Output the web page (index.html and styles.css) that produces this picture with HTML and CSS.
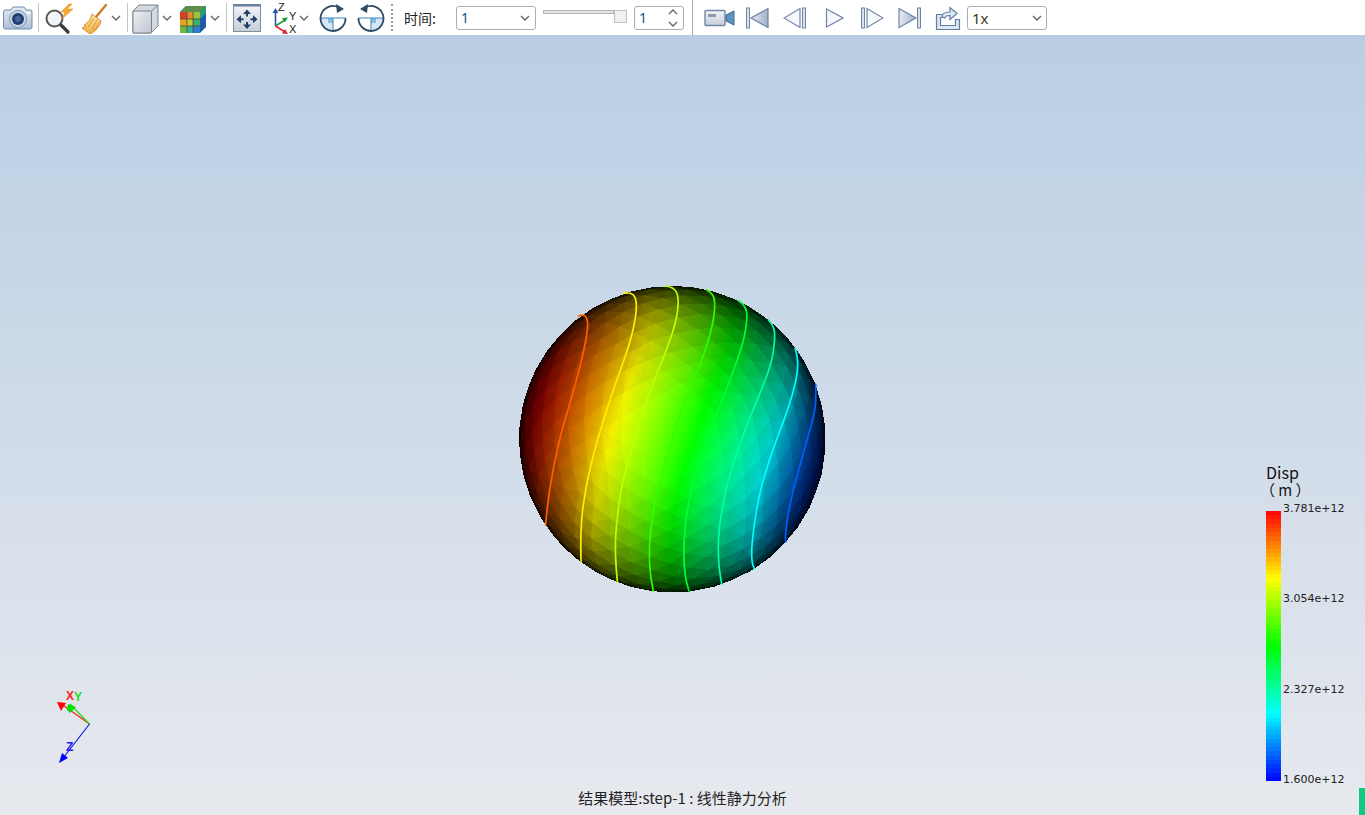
FILE: index.html
```html
<!DOCTYPE html>
<html lang="zh">
<head>
<meta charset="utf-8">
<title>结果模型</title>
<link rel="stylesheet" href="styles.css">
</head>
<body>
<svg class="defs" width="0" height="0" aria-hidden="true">
  <defs>
    <linearGradient id="gBlue" x1="0" y1="0" x2="0" y2="1"><stop offset="0" stop-color="#e6edf5"/><stop offset="1" stop-color="#aebfd4"/></linearGradient>
    <linearGradient id="gGrey" x1="0" y1="0" x2="1" y2="1"><stop offset="0" stop-color="#eef1f4"/><stop offset="1" stop-color="#bcc4cd"/></linearGradient>
    <linearGradient id="gFit" x1="0" y1="0" x2="0" y2="1"><stop offset="0" stop-color="#f2f4f7"/><stop offset="1" stop-color="#c6ced8"/></linearGradient>
    <linearGradient id="gMedia" x1="0" y1="0" x2="1" y2="0"><stop offset="0" stop-color="#e8edf4"/><stop offset="1" stop-color="#9fb0c8"/></linearGradient>
    <linearGradient id="gBroom" x1="0" y1="0" x2="0" y2="1"><stop offset="0" stop-color="#fde9a8"/><stop offset="1" stop-color="#f3ae3c"/></linearGradient>
  </defs>
</svg>
<header class="toolbar">
  <svg class="ml-0" width="30" height="26" viewBox="0 0 30 26"><path d="M2 5h6l2-3h11l2 3h4a2 2 0 0 1 2 2v15a2 2 0 0 1-2 2H2a2 2 0 0 1-1.500-2V7A2 2 0 0 1 2 5z" fill="url(#gBlue)" stroke="#6d8bab"/><circle cx="15" cy="14" r="8.500" fill="#c8d5e4" stroke="#7f97b2"/><circle cx="15" cy="14" r="6" fill="#1f3f73"/><circle cx="15" cy="14" r="3" fill="#48689c"/><rect x="24" y="7" width="3" height="2" fill="#fff"/></svg>
  <span class="sep ml-5"></span>
  <svg class="ml-5" width="30" height="32" viewBox="0 0 30 32"><circle cx="10.500" cy="16.500" r="8" fill="#f2f5f8" stroke="#555" stroke-width="2"/><path d="M17 23l7 7" stroke="#3b3b3b" stroke-width="3.200" stroke-linecap="round"/><path d="M25 2l-8 8h4l-3 7 11-10h-6l5-5z" fill="#f7a834" stroke="#e58a1a" stroke-width=".5"/></svg>
  <svg class="ml-7" width="27" height="32" viewBox="0 0 27 32"><path d="M25 3l-10 12" stroke="#c77f2c" stroke-width="2.400" stroke-linecap="round"/><path d="M11 12l9 7c-1 5-5 10-11 13l-8-6 4-1.500-2-1.500c4-2 7-6 8-11z" fill="url(#gBroom)" stroke="#d58a2c"/><path d="M13 16l-6 9M16 18l-5 10M18 20l-4 8" stroke="#d58a2c" stroke-width=".8"/></svg>
  <svg class="ml-3 chev" width="10" height="6" viewBox="0 0 10 6"><path d="M1 1l4 4 4-4" class="chev-line"/></svg>
  <span class="sep ml-6"></span>
  <svg class="ml-3" width="28" height="32" viewBox="0 0 28 32"><path d="M2 9l6-6h19v21l-7 7H2z" fill="#d4d9df" stroke="#76838f"/><rect x="2" y="9" width="18.500" height="22" rx="1" fill="url(#gGrey)" stroke="#76838f"/><path d="M20.500 9L27 3" stroke="#76838f"/></svg>
  <svg class="ml-3 chev" width="10" height="6" viewBox="0 0 10 6"><path d="M1 1l4 4 4-4" class="chev-line"/></svg>
  <svg class="ml-7" width="28" height="32" viewBox="0 0 28 32"><path d="M1 10l6-6h20v21l-6 6z" fill="#1d5aa8"/><path d="M1 10l6-6h20l-6 6z" fill="#5e8f4a"/><path d="M21 10l6-6v7l-6 6z" fill="#2d9c7a"/><rect x="1" y="10" width="20" height="21" fill="#e8b020"/><rect x="1" y="10" width="7" height="7" fill="#d8402a"/><rect x="8" y="10" width="6" height="7" fill="#e8862a"/><rect x="14" y="10" width="7" height="7" fill="#9bc23a"/><rect x="1" y="17" width="7" height="7" fill="#e8a020"/><rect x="8" y="17" width="6" height="7" fill="#c8c82a"/><rect x="14" y="17" width="7" height="7" fill="#3cb06a"/><rect x="1" y="24" width="7" height="7" fill="#6cb83a"/><rect x="8" y="24" width="6" height="7" fill="#30b0a0"/><rect x="14" y="24" width="7" height="7" fill="#2b7fd0"/><path d="M8 10v21M14 10v21M1 17h20M1 24h20" stroke="#4a4a3a" stroke-width=".8"/></svg>
  <svg class="ml-3 chev" width="10" height="6" viewBox="0 0 10 6"><path d="M1 1l4 4 4-4" class="chev-line"/></svg>
  <span class="sep ml-6"></span>
  <svg class="ml-5" width="30" height="30" viewBox="0 0 30 30"><rect x="1.500" y="1.500" width="27" height="27" fill="url(#gFit)" stroke="#7e8ea3"/><rect x="1" y="1" width="28" height="2.500" fill="#6a7f9c"/><g fill="#22406e"><path d="M15 6.500l4 4.500h-3v2.500h-2V11h-3zM15 26l4-4.500h-3V19h-2v2.500h-3zM4.500 16.200l4.500-4v3h2.500v2H9v3zM25.500 16.200l-4.500-4v3h-2.500v2H21v3z"/></g></svg>
  <svg class="ml-9" width="28" height="32" viewBox="0 0 28 32" role="img"><path d="M4.500 24V9" stroke="#2456b0" stroke-width="1.600"/><path d="M4.500 6l-3 5h6z" fill="#2456b0"/><path d="M4.500 24L14 18" stroke="#1d9a43" stroke-width="1.600"/><path d="M17 15.500l-6 .5 3 4.500z" fill="#1d9a43"/><path d="M4.500 24L14 30" stroke="#d7263a" stroke-width="1.600"/><path d="M17 32l-6-.5 3-4.500z" fill="#d7263a"/><text x="7" y="9" class="ax">Z</text><text x="18" y="18" class="ax">Y</text><text x="18" y="31" class="ax">X</text></svg>
  <svg class="chev" width="10" height="6" viewBox="0 0 10 6"><path d="M1 1l4 4 4-4" class="chev-line"/></svg>
  <svg class="ml-10" width="28" height="28" viewBox="0 0 28 28"><path d="M1.500 14H14v12.500A12.500 12.500 0 0 1 1.500 14z" fill="#d5e6f5"/><rect x="9" y="14" width="5" height="5" fill="#7fbfe8"/><path d="M1.500 14h25M14 14v12.500" stroke="#3a86c0" stroke-width="1"/><path d="M20 3.500A12.500 12.500 0 1 0 26.500 14" fill="none" stroke="#2f4a68" stroke-width="1.800"/><path d="M17 0l8 5-7 4z" fill="#2f4a68"/></svg>
  <svg class="ml-10" width="28" height="28" viewBox="0 0 28 28"><path d="M26.500 14H14v12.500A12.500 12.500 0 0 0 26.500 14z" fill="#d5e6f5"/><rect x="14" y="14" width="5" height="5" fill="#7fbfe8"/><path d="M1.500 14h25M14 14v12.500" stroke="#3a86c0" stroke-width="1"/><path d="M8 3.500A12.500 12.500 0 1 1 1.500 14" fill="none" stroke="#2f4a68" stroke-width="1.800"/><path d="M11 0L3 5l7 4z" fill="#2f4a68"/></svg>
  <span class="dots ml-6"></span>
  <span class="label ml-11">时间:</span>
  <div class="combo combo-time ml-18"><span class="value">1</span><svg width="10" height="6" viewBox="0 0 10 6"><path d="M1 1l4 4 4-4" class="chev-line"/></svg></div>
  <div class="slider ml-7"><span class="track"></span><span class="thumb"></span></div>
  <div class="combo spin ml-7"><span class="value">1</span><svg width="12" height="20" viewBox="0 0 12 20"><path d="M2 6l4-4 4 4M2 14l4 4 4-4" class="chev-line"/></svg></div>
  <span class="sep sep-tall ml-8"></span>
  <svg class="ml-11" width="31" height="20" viewBox="0 0 31 20"><rect x="1" y="2.500" width="20" height="15" rx="1" fill="url(#gFit)" stroke="#6f86a5" stroke-width="1.400"/><rect x="4" y="6" width="8" height="3" fill="#8c9aac"/><path d="M22 7l8-4v14l-8-4z" fill="#5e93bf" stroke="#3f6690"/></svg>
  <svg class="ml-10" width="24" height="22" viewBox="0 0 24 22"><rect x="1.500" y="1" width="3" height="20" fill="#d9e1ec" stroke="#6f83a2"/><path d="M23 1.500v19L6 11z" fill="url(#gMedia)" stroke="#6f83a2" stroke-width="1.200"/></svg>
  <svg class="ml-14" width="24" height="22" viewBox="0 0 24 22"><path d="M17 1.500v19L1 11z" fill="#f5f7fa" stroke="#7287a6" stroke-width="1.200"/><rect x="19.500" y="1" width="3" height="20" fill="#d9e1ec" stroke="#6f83a2"/></svg>
  <svg class="ml-18" width="19" height="22" viewBox="0 0 19 22"><path d="M1.500 2v18L18 11z" fill="#f5f7fa" stroke="#7287a6" stroke-width="1.200"/></svg>
  <svg class="ml-16" width="24" height="22" viewBox="0 0 24 22"><rect x="1.500" y="1" width="3" height="20" fill="#d9e1ec" stroke="#6f83a2"/><path d="M7 1.500v19L23 11z" fill="#f5f7fa" stroke="#7287a6" stroke-width="1.200"/></svg>
  <svg class="ml-14" width="24" height="22" viewBox="0 0 24 22"><path d="M1 1.500v19L18 11z" fill="url(#gMedia)" stroke="#6f83a2" stroke-width="1.200"/><rect x="19.500" y="1" width="3" height="20" fill="#d9e1ec" stroke="#6f83a2"/></svg>
  <svg class="ml-13" width="26" height="24" viewBox="0 0 26 24"><path d="M1.500 8.500h7v3h-3v8h15v-6h4v10h-23z" fill="#dfe7f1" stroke="#5f7ea6" stroke-width="1.200"/><path d="M7 11c0-4 3-5 8-5V1.500l7 6-7 6V9.500c-3 0-5 .5-5 2.500z" fill="#dfe7f1" stroke="#5f7ea6" stroke-width="1.200"/></svg>
  <div class="combo combo-speed ml-6"><span class="value value-speed">1x</span><svg width="10" height="6" viewBox="0 0 10 6"><path d="M1 1l4 4 4-4" class="chev-line"/></svg></div>
</header>
<main class="viewport">
  <canvas id="sphere" class="sphere" width="325" height="320"></canvas>
  <svg class="triad" width="70" height="90" viewBox="0 0 70 90">
    <path d="M49.500 44L20 23" stroke="#ff1a1a" stroke-width="1.200"/>
    <path d="M49.500 44L30 24" stroke="#1ae01a" stroke-width="1.200"/>
    <path d="M49.500 44L20 82" stroke="#1414f0" stroke-width="1.200"/>
    <path d="M17 22l9 1-5 8z" fill="#ff0000"/>
    <path d="M28 24l8 3-6 6-3-3z" fill="#00e000"/>
    <path d="M19 83l3-10 6 5z" fill="#0000ff"/>
    <text x="26" y="20" class="tx tx-x">X</text>
    <text x="34" y="21" class="tx tx-y">Y</text>
    <text x="26" y="71" class="tx tx-z">Z</text>
  </svg>
  <section class="legend">
    <div class="legend-title">Disp<span class="legend-unit">（ m ）</span></div>
    <div class="legend-body">
      <canvas id="bar" class="legend-bar" width="15" height="270"></canvas>
      <div class="legend-labels">
        <span>3.781e+12</span>
        <span>3.054e+12</span>
        <span>2.327e+12</span>
        <span>1.600e+12</span>
      </div>
    </div>
  </section>
  <p class="status">结果模型:step-1 : 线性静力分析</p>
  <span class="corner"></span>
</main>
<script src="script.js"></script>
</body>
</html>
```

FILE: styles.css
```css
* { box-sizing: border-box; }
html, body {
  margin: 0;
  width: 1365px;
  height: 815px;
  overflow: hidden;
  background: #fff;
  font-family: "Noto Sans CJK SC", "Noto Sans", sans-serif;
}
.defs { position: absolute; }
.toolbar {
  display: flex;
  align-items: center;
  height: 35px;
  padding-left: 3px;
  background: #fff;
  color: #222;
  font-size: 14px;
}
.toolbar > * { flex: none; }
.ml-0 { margin-left: 0; }
.ml-3 { margin-left: 3px; }
.ml-5 { margin-left: 5px; }
.ml-6 { margin-left: 6px; }
.ml-7 { margin-left: 7px; }
.ml-8 { margin-left: 8px; }
.ml-9 { margin-left: 9px; }
.ml-10 { margin-left: 10px; }
.ml-11 { margin-left: 11px; }
.ml-13 { margin-left: 13px; }
.ml-14 { margin-left: 14px; }
.ml-16 { margin-left: 16px; }
.ml-18 { margin-left: 18px; }
.sep { width: 1px; height: 29px; background: #c4c4c4; }
.sep-tall { height: 35px; background: #a8a8a8; }
.dots { width: 2px; height: 27px; border-left: 2px dotted #9a9a9a; }
.chev-line { fill: none; stroke: #5c6670; stroke-width: 1.400; }
.ax { font: 11px "Liberation Sans", sans-serif; fill: #222; }
.label { width: 34px; white-space: nowrap; }
.combo {
  display: flex;
  align-items: center;
  justify-content: space-between;
  height: 24px;
  padding: 0 5px 0 4px;
  border: 1px solid #adadad;
  border-radius: 3px;
  background: #fff;
}
.combo-time { width: 80px; }
.combo-speed { width: 80px; padding-right: 4px; }
.spin { width: 50px; padding-right: 4px; }
.value { color: #0f4f8f; font: 14px "Noto Sans", sans-serif; }
.value-speed { color: #3a3a20; font-size: 15px; }
.slider {
  display: flex;
  align-items: flex-start;
  width: 84px;
  height: 24px;
  padding-top: 4px;
}
.track { width: 71px; height: 4px; background: #e6e6e6; border: 1px solid #b4b4b4; }
.thumb { width: 13px; height: 13px; background: #f0f0f0; border: 1px solid #c0c0c0; }
.viewport {
  position: relative;
  height: 780px;
  background: linear-gradient(to bottom, #b9cee4, #e7e9ee);
}
.sphere { position: absolute; left: 510px; top: 245px; }
.triad { position: absolute; left: 40px; top: 645px; }
.tx { font: bold 12px "Liberation Sans", sans-serif; }
.tx-x { fill: #ff2020; }
.tx-y { fill: #20e020; }
.tx-z { fill: #2020f0; }
.legend { position: absolute; left: 1266px; top: 428px; }
.legend-title { font-size: 16px; line-height: 18px; color: #111; height: 48px; }
.legend-unit { display: block; margin-left: -6px; font-size: 15px; }
.legend-body { display: flex; align-items: flex-start; }
.legend-bar { display: block; }
.legend-labels {
  display: flex;
  flex-direction: column;
  justify-content: space-between;
  height: 285px;
  margin: -9px 0 0 2px;
  font: 11px/14px "DejaVu Sans", sans-serif;
  color: #222;
}
.status {
  position: absolute;
  left: 0;
  right: 0;
  bottom: 7px;
  margin: 0;
  text-align: center;
  font-size: 15px;
  line-height: 20px;
  color: #222;
}
.corner { position: absolute; left: 1359px; top: 753px; width: 6px; height: 27px; background: #0fcb80; }
```

FILE: script.js
```js
(function () {
  // Displacement rainbow: v = 1 is red, v = 0 is blue.
  function rainbow(v) {
    v = Math.max(0, Math.min(1, v));
    var h = (1 - v) * 4, i = Math.floor(h), f = h - i;
    switch (i) {
      case 0: return [255, 255 * f, 0];
      case 1: return [255 * (1 - f), 255, 0];
      case 2: return [0, 255, 255 * f];
      case 3: return [0, 255 * (1 - f), 255];
      default: return [0, 0, 255];
    }
  }

  var lines = [
    { c: "#ff6000", p: [[205,108],[222,102],[233,118],[233,150],[222,210],[205,280],[180,370],[150,470],[125,590],[112,680],[107,735]] },
    { c: "#ffee00", p: [[340,40],[365,36],[380,60],[378,110],[360,190],[320,300],[280,420],[240,560],[218,680],[212,760],[213,845]] },
    { c: "#bfff00", p: [[465,18],[490,20],[507,50],[500,120],[470,210],[420,330],[375,470],[335,610],[318,740],[315,820],[322,905]] },
    { c: "#30ff00", p: [[590,30],[610,40],[616,80],[605,150],[570,260],[520,370],[470,530],[430,680],[417,800],[420,880],[430,933]] },
    { c: "#00ff30", p: [[685,62],[705,75],[713,110],[700,190],[660,300],[610,430],[560,560],[530,690],[520,810],[525,890],[537,933]] },
    { c: "#00ffa0", p: [[775,120],[790,135],[796,170],[785,250],[750,340],[700,460],[650,610],[625,750],[625,850],[635,912]] },
    { c: "#00ffff", p: [[855,205],[865,235],[860,300],[830,400],[780,530],[745,650],[725,790],[725,845],[733,867]] },
    { c: "#0060ff", p: [[917,312],[920,370],[900,450],[860,590],[835,690],[825,775],[828,785]] }
  ];
  var levels = [0.905, 0.79, 0.68, 0.57, 0.46, 0.35, 0.24, 0.12];

  function xAt(pts, y) {
    var s = pts;
    if (y <= s[0][1]) return s[0][0];
    for (var i = 1; i < s.length; i++) {
      if (y <= s[i][1]) {
        var f = (y - s[i - 1][1]) / (s[i][1] - s[i - 1][1]);
        return s[i - 1][0] + f * (s[i][0] - s[i - 1][0]);
      }
    }
    return s[s.length - 1][0];
  }
  var sorted = lines.map(function (l) {
    return l.p.slice().sort(function (a, b) { return a[1] - b[1]; });
  });
  function field(px, py) {
    var zx = px * 3, zy = py * 3, n = lines.length, prev = xAt(sorted[0], zy);
    if (zx < prev) {
      var w0 = prev - xAt(sorted[1], zy);
      return levels[0] + (prev - zx) * 0.115 / Math.max(60, -w0);
    }
    for (var k = 1; k < n; k++) {
      var x = xAt(sorted[k], zy);
      if (zx < x) return levels[k - 1] + (zx - prev) / (x - prev) * (levels[k] - levels[k - 1]);
      prev = x;
    }
    return levels[n - 1] - (zx - prev) * 0.0012;
  }

  // Geodesic sphere.
  var t = (1 + Math.sqrt(5)) / 2;
  var V = [[-1,t,0],[1,t,0],[-1,-t,0],[1,-t,0],[0,-1,t],[0,1,t],[0,-1,-t],[0,1,-t],[t,0,-1],[t,0,1],[-t,0,-1],[-t,0,1]].map(norm);
  var F = [[0,11,5],[0,5,1],[0,1,7],[0,7,10],[0,10,11],[1,5,9],[5,11,4],[11,10,2],[10,7,6],[7,1,8],[3,9,4],[3,4,2],[3,2,6],[3,6,8],[3,8,9],[4,9,5],[2,4,11],[6,2,10],[8,6,7],[9,8,1]];
  function norm(a) { var l = Math.hypot(a[0], a[1], a[2]); return [a[0] / l, a[1] / l, a[2] / l]; }
  function mid(a, b) { return norm([a[0] + b[0], a[1] + b[1], a[2] + b[2]]); }
  var tris = F.map(function (f) { return [V[f[0]], V[f[1]], V[f[2]]]; });
  for (var d = 0; d < 3; d++) {
    var out = [];
    tris.forEach(function (q) {
      var a = mid(q[0], q[1]), b = mid(q[1], q[2]), c = mid(q[2], q[0]);
      out.push([q[0], a, c], [q[1], b, a], [q[2], c, b], [a, b, c]);
    });
    tris = out;
  }
  var ax = 0.42, ay = 0.31, az = 0.2;
  function rot(p) {
    var x = p[0], y = p[1], z = p[2], u, w;
    u = y * Math.cos(ax) - z * Math.sin(ax); w = y * Math.sin(ax) + z * Math.cos(ax); y = u; z = w;
    u = x * Math.cos(ay) + z * Math.sin(ay); w = -x * Math.sin(ay) + z * Math.cos(ay); x = u; z = w;
    u = x * Math.cos(az) - y * Math.sin(az); w = x * Math.sin(az) + y * Math.cos(az); x = u; y = w;
    return [x, y, z];
  }

  var cv = document.getElementById("sphere"), g = cv.getContext("2d");
  var W = cv.width, H = cv.height, img = g.createImageData(W, H), D = img.data;
  var CX = 162.3, CY = 159.2, R = 153.4;
  tris.forEach(function (q) {
    var a = rot(q[0]), b = rot(q[1]), c = rot(q[2]);
    var n = norm([a[0] + b[0] + c[0], a[1] + b[1] + c[1], a[2] + b[2] + c[2]]);
    if (n[2] <= 0) return;
    var shade = Math.min(1, Math.pow(n[2], 1.05) * 1.03);
    var P = [a, b, c].map(function (v) { return [CX + R * v[0], CY - R * v[1]]; });
    var x0 = Math.floor(Math.min(P[0][0], P[1][0], P[2][0])), x1 = Math.ceil(Math.max(P[0][0], P[1][0], P[2][0]));
    var y0 = Math.floor(Math.min(P[0][1], P[1][1], P[2][1])), y1 = Math.ceil(Math.max(P[0][1], P[1][1], P[2][1]));
    function e(A, B, x, y) { return (B[0] - A[0]) * (y - A[1]) - (B[1] - A[1]) * (x - A[0]); }
    var s = e(P[0], P[1], P[2][0], P[2][1]) > 0 ? 1 : -1;
    for (var y = Math.max(0, y0); y <= y1 && y < H; y++) {
      for (var x = Math.max(0, x0); x <= x1 && x < W; x++) {
        var px = x + 0.5, py = y + 0.5;
        if (s * e(P[0], P[1], px, py) < -0.01 || s * e(P[1], P[2], px, py) < -0.01 || s * e(P[2], P[0], px, py) < -0.01) continue;
        var col = rainbow(field(px, py)), i = (y * W + x) * 4;
        D[i] = col[0] * shade; D[i + 1] = col[1] * shade; D[i + 2] = col[2] * shade; D[i + 3] = 255;
      }
    }
  });
  g.putImageData(img, 0, 0);

  g.lineWidth = 1.7;
  g.lineJoin = "round";
  g.lineCap = "round";
  lines.forEach(function (l) {
    var p = l.p.map(function (q) { return [q[0] / 3, q[1] / 3]; });
    g.strokeStyle = l.c;
    g.beginPath();
    g.moveTo(p[0][0], p[0][1]);
    for (var i = 1; i < p.length - 1; i++) {
      g.quadraticCurveTo(p[i][0], p[i][1], (p[i][0] + p[i + 1][0]) / 2, (p[i][1] + p[i + 1][1]) / 2);
    }
    g.lineTo(p[p.length - 1][0], p[p.length - 1][1]);
    g.stroke();
  });

  // Legend bar, banded as the solver's colour table is.
  var bar = document.getElementById("bar"), b = bar.getContext("2d"), bands = 64;
  for (var k = 0; k < bands; k++) {
    var col = rainbow(1 - (k + 0.5) / bands);
    b.fillStyle = "rgb(" + Math.round(col[0]) + "," + Math.round(col[1]) + "," + Math.round(col[2]) + ")";
    var top = Math.round(k * bar.height / bands), bot = Math.round((k + 1) * bar.height / bands);
    b.fillRect(0, top, bar.width, bot - top);
  }
})();
```
